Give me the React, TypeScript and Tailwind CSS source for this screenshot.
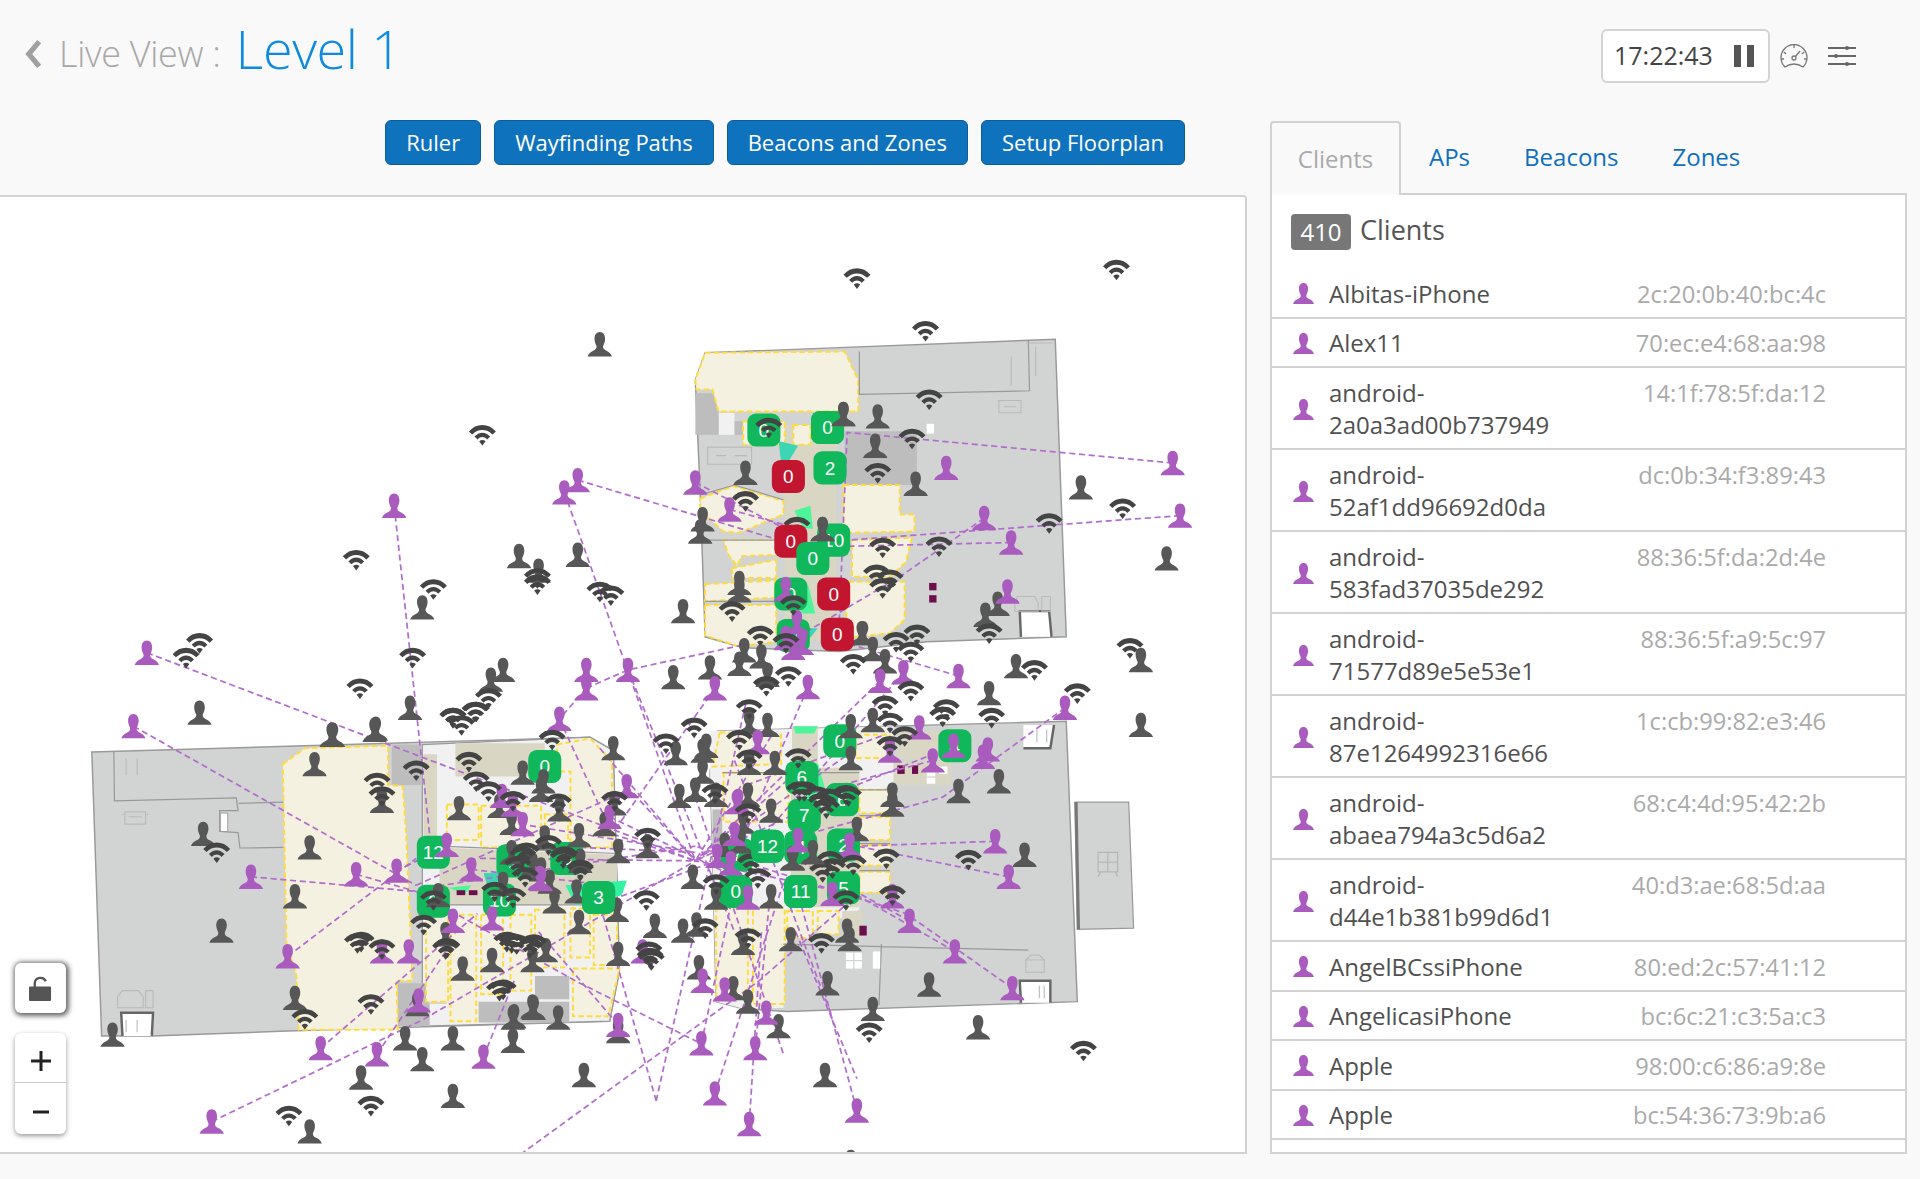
import { Fragment } from "react"

type Pt = [number, number]

const clients = [
  { name: "Albitas-iPhone", mac: "2c:20:0b:40:bc:4c" },
  { name: "Alex11", mac: "70:ec:e4:68:aa:98" },
  { name: "android-2a0a3ad00b737949", mac: "14:1f:78:5f:da:12" },
  { name: "android-52af1dd96692d0da", mac: "dc:0b:34:f3:89:43" },
  { name: "android-583fad37035de292", mac: "88:36:5f:da:2d:4e" },
  { name: "android-71577d89e5e53e1", mac: "88:36:5f:a9:5c:97" },
  { name: "android-87e1264992316e66", mac: "1c:cb:99:82:e3:46" },
  { name: "android-abaea794a3c5d6a2", mac: "68:c4:4d:95:42:2b" },
  { name: "android-d44e1b381b99d6d1", mac: "40:d3:ae:68:5d:aa" },
  { name: "AngelBCssiPhone", mac: "80:ed:2c:57:41:12" },
  { name: "AngelicasiPhone", mac: "bc:6c:21:c3:5a:c3" },
  { name: "Apple", mac: "98:00:c6:86:a9:8e" },
  { name: "Apple", mac: "bc:54:36:73:9b:a6" },
]

// map coordinates are in a 1017 wide space, offset 160 from the top of the page
const darkPeople: Pt[] = [
  [490,280],[689,337],[717,339],[715,363],[609,385],[748,394],[883,397],[953,455],[574,423],[572,433],[604,475],[604,481],[558,498],[815,492],[805,501],
  [424,453],[440,465],[472,452],[345,495],[163,581],[411,546],[401,554],[335,577],[272,599],[307,594],[550,552],[580,544],[604,541],[608,530],[622,535],
  [627,550],[705,516],[713,529],[723,539],[830,543],[932,538],[932,591],[808,565],[713,587],[695,592],[695,618],[612,589],[627,591],[577,608],[552,614],
  [574,629],[568,644],[555,649],[585,648],[612,622],[633,622],[611,648],[630,661],[607,670],[605,686],[592,689],[648,700],[837,697],[700,676],[729,648],
  [729,656],[816,637],[783,645],[566,715],[585,732],[630,731],[646,766],[607,769],[694,766],[692,759],[676,802],[759,803],[713,823],[799,838],[571,789],
  [599,806],[611,817],[636,837],[477,877],[674,877],[558,759],[569,754],[535,755],[505,778],[473,752],[504,742],[453,735],[471,727],[505,694],[473,681],
  [494,672],[502,655],[457,660],[501,610],[271,599],[257,623],[166,680],[253,691],[241,731],[181,759],[241,814],[92,844],[331,847],[370,847],[345,864],
  [295,879],[370,894],[253,923],[312,653],[375,659],[341,819],[427,630],[444,637],[442,644],[408,657],[418,671],[445,683],[418,695],[435,705],[442,709],
  [474,702],[449,719],[358,730],[411,721],[364,762],[378,790],[402,783],[435,783],[446,775],[435,821],[420,829],[456,830],[419,849],[505,841],[436,822],
  [419,830],[306,595],[529,690],[647,700],[672,431],[704,516],[574,612],[695,948],
]

const wifis: Pt[] = [
  [700,226],[912,219],[756,269],[394,354],[759,325],[745,357],[717,385],[609,408],[721,446],[767,445],[857,426],[917,414],[651,429],[716,468],[727,472],
  [721,479],[648,493],[598,498],[628,348],[621,518],[642,524],[749,517],[732,523],[744,531],[808,516],[923,528],[845,546],[880,565],[291,456],[354,480],
  [163,524],[152,536],[337,536],[294,561],[399,569],[389,580],[370,585],[377,591],[439,471],[439,476],[490,482],[499,485],[451,603],[544,606],[567,593],
  [604,603],[644,551],[626,559],[744,563],[723,575],[612,578],[773,578],[770,584],[810,585],[697,541],[727,589],[739,600],[727,608],[652,618],[612,619],
  [653,645],[667,649],[675,659],[693,649],[584,647],[611,663],[724,700],[791,701],[678,702],[680,708],[697,705],[614,704],[672,711],[691,648],[657,645],
  [671,655],[677,651],[529,683],[460,700],[474,709],[427,698],[613,704],[619,716],[585,721],[528,734],[691,734],[729,730],[576,757],[531,781],[530,776],
  [611,765],[671,769],[710,842],[885,857],[418,769],[436,770],[411,807],[177,695],[308,638],[312,649],[340,628],[383,621],[389,637],[399,645],[292,769],
  [312,774],[346,754],[365,773],[303,819],[249,831],[303,902],[236,910],[370,585],[388,580],[419,653],[456,655],[502,653],[448,689],[461,698],[430,695],
  [423,706],[429,715],[474,710],[354,734],[404,727],[419,732],[364,774],[414,768],[422,770],[433,773],[408,808],[295,768],[532,783],
]

const purplePeople: Pt[] = [
  [958,377],[964,420],[826,442],[804,422],[773,381],[568,393],[596,415],[472,391],[461,401],[322,412],[120,532],[109,592],[870,577],[783,551],[738,548],
  [719,555],[660,560],[584,561],[513,546],[479,546],[479,561],[457,586],[751,593],[779,608],[807,611],[803,617],[762,620],[727,612],[619,605],[602,654],
  [600,680],[652,685],[694,689],[586,698],[597,704],[813,686],[824,715],[743,751],[780,776],[827,806],[700,906],[612,917],[584,892],[617,855],[573,851],
  [574,800],[592,807],[626,826],[505,836],[525,776],[512,641],[498,666],[427,672],[441,716],[823,482],[642,480],[651,507],[642,520],[655,524],[648,528],
  [395,862],[308,860],[262,855],[173,915],[235,780],[205,715],[291,713],[324,710],[385,709],[365,689],[370,751],[334,776],[312,776],[342,816],[402,749],
  [410,649],[419,656],[442,717],[611,732],[680,729],[729,731],[603,653],
]

const greenBadges: [number, number, string][] = [
  [624,350,"0"],[676,348,"0"],[678,381,"2"],[681,440,"10"],[646,484,"0"],[648,518,"0"],[686,604,"0"],[780,608,"4"],[445,625,"0"],[655,634,"6"],
  [688,652,"6"],[657,665,"7"],[627,690,"12"],[654,691,"4"],[689,689,"2"],[601,727,"0"],[654,727,"11"],[689,724,"5"],[489,732,"3"],[354,695,"12"],
  [354,735,"0"],[419,702,"1"],[408,734,"10"],[463,700,"5"],[602,697,"7"],
]

const topBadges: [number, number, string, string][] = [
  [644,388,"0","#c2152f"],[646,441,"0","#c2152f"],[664,455,"0","#10b75b"],[681,484,"0","#c2152f"],[684,517,"0","#c2152f"],[676,348,"0","#10b75b"],
  [627,690,"12","#10b75b"],[654,727,"11","#10b75b"],[489,732,"3","#10b75b"],
]

const lines: Pt[][] = [
  [[958,377],[692,352],[685,520]],
  [[964,420],[692,440]],
  [[826,442],[692,445]],
  [[804,422],[735,470],[650,520]],
  [[472,391],[640,441]],
  [[568,393],[640,430]],
  [[596,415],[650,430]],
  [[461,401],[568,702]],
  [[322,412],[352,690]],
  [[120,532],[568,702]],
  [[109,592],[340,722]],
  [[205,715],[340,727]],
  [[291,713],[340,727]],
  [[324,710],[355,695]],
  [[235,780],[340,700]],
  [[262,855],[390,745]],
  [[308,860],[368,770]],
  [[173,915],[345,832],[568,702]],
  [[395,862],[420,800]],
  [[505,836],[440,760]],
  [[479,561],[513,546],[610,525]],
  [[479,561],[457,586]],
  [[513,546],[600,760]],
  [[573,851],[605,700]],
  [[617,855],[630,720]],
  [[584,892],[640,720]],
  [[612,917],[622,760]],
  [[700,906],[655,740]],
  [[536,898],[485,720]],
  [[536,898],[610,570]],
  [[425,942],[620,800],[700,730]],
  [[827,806],[740,745],[568,690]],
  [[780,776],[700,730],[568,702]],
  [[743,751],[640,695]],
  [[824,715],[700,690]],
  [[813,686],[700,690]],
  [[870,577],[770,650],[660,680]],
  [[779,608],[700,640],[568,702]],
  [[762,620],[650,650]],
  [[783,551],[684,522]],
  [[719,555],[568,702]],
  [[738,548],[625,680]],
  [[660,560],[600,700]],
  [[584,561],[500,680]],
  [[457,586],[500,680],[568,702]],
  [[512,641],[568,702]],
  [[342,725],[568,690]],
  [[392,700],[568,702]],
  [[450,690],[568,695]],
  [[425,672],[568,695]],
  [[470,745],[590,700]],
  [[498,666],[590,710]],
  [[340,722],[500,650]],
  [[340,727],[470,800],[572,851]],
  [[385,709],[480,720]],
  [[490,610],[568,702],[650,630]],
  [[630,600],[568,702],[700,610]],
  [[600,620],[680,830]],
  [[568,650],[640,860]],
  [[610,640],[720,600]],
  [[650,760],[700,880]],
]

const rooms: Pt[][] = [
  // top building
  [[576,287],[690,286],[701,309],[701,335],[587,335],[582,317],[569,317],[568,309]],
  [[689,395],[735,395],[735,419],[747,419],[747,433],[696,434],[689,433]],
  [[696,440],[745,438],[740,458],[727,470],[696,470]],
  [[693,474],[739,474],[739,505],[727,516],[690,520]],
  [[572,406],[599,396],[640,408],[640,419],[604,434],[591,433],[572,416]],
  [[591,440],[640,440],[640,452],[606,453],[602,461],[595,452]],
  [[598,463],[634,456],[634,471],[598,471]],
  [[576,476],[633,473],[633,487],[576,490]],
  [[576,493],[634,493],[634,523],[604,527],[576,518]],
  [[607,343],[641,343],[641,362],[607,362]],
  [[648,346],[662,346],[662,362],[648,362]],
  // left building
  [[231,623],[249,610],[317,608],[317,640],[329,641],[332,683],[337,800],[324,800],[325,840],[244,840],[242,795],[234,770]],
  [[365,656],[391,656],[391,685],[365,685]],
  [[393,657],[442,657],[442,691],[393,691]],
  [[445,664],[464,664],[464,689],[445,689]],
  [[455,607],[482,602],[500,621],[500,691],[466,691],[466,629],[455,629]],
  [[348,746],[366,746],[366,817],[348,817]],
  [[368,746],[389,746],[389,833],[368,833]],
  [[393,746],[411,746],[411,811],[393,811]],
  [[417,746],[434,746],[434,808],[417,808]],
  [[437,742],[461,742],[461,789],[437,789]],
  [[466,741],[482,741],[482,781],[466,781]],
  [[485,746],[504,746],[504,787],[485,787]],
  [[468,790],[506,790],[497,829],[468,829]],
  // right building
  [[588,597],[638,599],[638,623],[582,625]],
  [[699,599],[727,599],[727,618],[699,618]],
  [[591,630],[644,630],[644,670],[591,670]],
  [[702,644],[727,644],[727,663],[702,663]],
  [[702,666],[727,666],[727,685],[702,685]],
  [[702,689],[727,689],[727,706],[702,706]],
  [[702,711],[727,711],[727,728],[702,728]],
  [[585,740],[611,740],[611,814],[585,814]],
  [[615,740],[641,740],[641,819],[615,819]],
  [[643,743],[664,743],[664,765],[643,765]],
  [[668,743],[685,743],[685,762],[668,762]],
]

const beige: Pt[][] = [
  [[641,346],[683,346],[683,522],[641,522]],
  [[346,615],[357,615],[357,683],[346,683]],
  [[350,751],[365,751],[365,819],[350,819]],
  [[359,691],[504,697],[504,738],[359,738]],
  [[372,606],[445,606],[445,633],[372,633]],
  [[647,592],[668,592],[668,623],[647,623]],
  [[733,596],[777,596],[777,619],[733,619]],
  [[730,621],[777,621],[777,640],[730,640]],
  [[646,626],[702,626],[702,740],[646,740]],
  [[688,743],[705,743],[705,765],[688,765]],
]

const grayBlocks: Pt[][] = [
  [[690,351],[749,351],[749,395],[690,395]],
  [[568,320],[587,320],[587,354],[568,354]],
  [[600,343],[641,343],[641,354],[600,354]],
  [[320,607],[344,607],[344,640],[320,640]],
  [[325,802],[351,802],[351,837],[325,837]],
  [[437,796],[465,796],[465,815],[437,815]],
  [[391,817],[465,817],[465,834],[391,834]],
  [[582,660],[590,660],[590,690],[582,690]],
]

function pts(list: Pt[]) {
  return list.map(p => p.join(",")).join(" ")
}

const personPath = "M12 0C8.500 0 6.800 3 6.800 6.800c0 3 1.200 5.400 2 7 .2 2.400-.8 3.600-3.200 4.600C3 19.600 1 21 0 24h24c-1-3-3-4.400-5.600-5.600-2.400-1-3.400-2.200-3.200-4.600.8-1.600 2-4 2-7C17.200 3 15.500 0 12 0z"

function Person({ x, y, color }: { x: number; y: number; color: string }) {
  return <path d={personPath} fill={color} transform={`translate(${x - 10} ${y - 10}) scale(0.83)`} />
}

function Wifi({ x, y }: { x: number; y: number }) {
  return (
    <g transform={`translate(${x - 11} ${y - 8}) scale(1.05)`} fill="#444">
      <path d="M0 5C5.600-1.700 15.400-1.700 21 5l-2.600 2.400C13.800 2.800 7.200 2.800 2.600 7.400z" />
      <path d="M4.400 9C8 5 13 5 16.600 9l-2.400 2.200C11.800 8.800 9.200 8.800 6.800 11.200z" />
      <path d="M8 12.600c1.600-1.400 3.400-1.400 5 0L10.500 16z" />
    </g>
  )
}

function Badge({ x, y, label, color }: { x: number; y: number; label: string; color: string }) {
  return (
    <g>
      <rect x={x - 13.5} y={y - 13.5} width={27} height={27} rx={7} fill={color} />
      <text x={x} y={y + 5.5} textAnchor="middle" fontSize={15.5} fill="#fff" fontFamily="'Liberation Sans', sans-serif">
        {label}
      </text>
    </g>
  )
}

function FloorPlan() {
  return (
    <g>
      {/* building shells */}
      <polygon points={pts([[576,287],[862,276],[871,519],[757,523],[686,531],[607,528],[576,519],[572,403],[568,309]])} fill="#d2d4d3" stroke="#999" strokeWidth={1.2} />
      <polygon points={pts([[587,336],[600,336],[600,354],[587,354]])} fill="#f1f1f1" />
      <polygon points={pts([[75,613],[249,608],[482,601],[501,612],[506,792],[498,833],[367,837],[235,841],[124,845],[83,845]])} fill="#d2d4d3" stroke="#999" strokeWidth={1.2} />
      <polygon points={pts([[345,607],[482,601],[501,612],[506,792],[498,833],[345,837]])} fill="#f1f1f1" stroke="#999" strokeWidth={1} />
      <polygon points={pts([[586,596],[835,589],[871,588],[880,817],[643,825],[608,823],[585,817],[582,691],[580,629]])} fill="#d2d4d3" stroke="#999" strokeWidth={1.2} />
      <polygon points={pts([[580,596],[730,592],[730,640],[702,650],[702,742],[640,770],[640,822],[608,823],[585,817],[582,691],[580,629]])} fill="#f1f1f1" />
      <polygon points={pts([[878,654],[922,654],[926,757],[880,758]])} fill="#d2d4d3" stroke="#999" />
      <path d="M879 654l2 104" stroke="#777" strokeWidth={2.5} fill="none" />
      <path d="M897 695h16v16h-16zM897 703h16M905 695v16M899 711l-2 4M911 711l2 4" stroke="#b5b5b5" fill="none" />
      {grayBlocks.map((b, i) => <polygon key={i} points={pts(b)} fill="#bdbdbd" />)}
      {beige.map((b, i) => <polygon key={i} points={pts(b)} fill="#d9d6c3" />)}
      {rooms.map((r, i) => (
        <polygon key={i} points={pts(r)} fill="#f5f1e0" stroke="#ffdc3e" strokeWidth={1.6} strokeDasharray="4.5 2.5" />
      ))}
      {/* walls */}
      <path d="M702 286v35l139-3 -1-41M93 613l.5 40 99.500-2.500 1.500 10.500h-15v17l15 1 1.500 12.500 35.500-.5M195 655l36.500-1M590 630h112M702 644h30M702 665h25M702 688h25M702 710h25M720 770l-2 50M640 770l80 2 120 3M572 403l28-8 40 12M572 440h68M576 490h58M360 690l144 6M360 738h144" stroke="#999" strokeWidth={1} fill="none" />
      <polygon points={pts([[180,663],[186,663],[186,678],[180,678]])} fill="#fff" stroke="#888" strokeWidth={.6} />
      {/* lifts */}
      <polygon points={pts([[99,826],[125,826],[124,845],[101,845]])} fill="#fff" />
      <path d="M100 845l-1-19h26l-1 19" stroke="#666" strokeWidth={2} fill="none" />
      <polygon points={pts([[833,498],[857,498],[860,519],[834,519]])} fill="#fff" />
      <path d="M834 519l-1-21h24l2 21" stroke="#666" strokeWidth={2} fill="none" />
      <polygon points={pts([[836,591],[861,591],[858,610],[836,610]])} fill="#fff" />
      <path d="M836 610h22l3-19" stroke="#666" strokeWidth={2} fill="none" />
      <polygon points={pts([[833,800],[858,800],[858,818],[834,818]])} fill="#fff" />
      <path d="M834 818l-1-18h25v18" stroke="#666" strokeWidth={2} fill="none" />
      {/* car bays and arrows */}
      <g stroke="#b9b9b9" strokeWidth={.9} fill="none">
        <path d="M102 662h17v10h-17zM105 666h11M101 664h-1M120 664h1" />
        <path d="M96 822v-9l4-5h13l4 5v9zM119 808h6v14h-6z" />
        <path d="M816 326h18v10h-18zM820 331h10" />
        <path d="M829 491l2-5h14l3 5v7h-19zM851 486h7v12h-7z" />
        <path d="M847 595v10M855 595v10M103 618v14M112 618v14M103 832v10M112 832v10M849 804v10M853 804v10M838 279h22M826 290v24M846 282v24" />
        <path d="M838 783h15v10h-15zM842 779h7l4 4h-15z" />
        <path d="M578 364h36v14h-36zM585 371h8M600 371h10" />
      </g>
      {/* teal zones and small rooms */}
      <polygon points={pts([[636,359],[652,363],[644,376],[638,376]])} fill="#3dd6b5" />
      <polygon points={pts([[649,416],[662,412],[664,431],[656,430]])} fill="#4df59a" />
      <polygon points={pts([[660,476],[666,500],[654,500]])} fill="#4df59a" />
      <polygon points={pts([[640,512],[668,512],[660,522],[642,522]])} fill="#3dd6b5" />
      <polygon points={pts([[654,630],[668,622],[676,650],[658,652]])} fill="#4df59a" />
      <polygon points={pts([[648,592],[668,592],[665,598],[650,598]])} fill="#4df59a" />
      <polygon points={pts([[462,722],[512,718],[508,730],[470,738]])} fill="#33f2a2" />
      <polygon points={pts([[395,712],[412,712],[408,722],[398,722]])} fill="#3dd6b5" />
      <polygon points={pts([[366,724],[385,722],[380,729]])} fill="#4df59a" />
      <g fill="#6b0f4d">
        <rect x={759} y={475} width={6} height={6} />
        <rect x={759} y={485} width={6} height={6} />
        <rect x={733} y={624} width={6} height={7} />
        <rect x={745} y={624} width={5} height={7} />
        <rect x={702} y={755} width={6} height={8} />
        <rect x={373} y={726} width={7} height={4} />
        <rect x={383} y={726} width={7} height={4} />
      </g>
      <g fill="#fff">
        <rect x={691} y={777} width={6} height={6} />
        <rect x={698} y={777} width={6} height={6} />
        <rect x={691} y={784} width={6} height={6} />
        <rect x={698} y={784} width={6} height={6} />
        <rect x={713} y={776} width={6} height={14} />
        <rect x={757} y={627} width={7} height={6} />
        <rect x={757} y={634} width={7} height={5} />
        <rect x={767} y={625} width={7} height={6} />
        <rect x={757} y={345} width={6} height={8} />
      </g>
    </g>
  )
}

function LiveMap() {
  return (
    <svg viewBox="0 160 1017 782" className="block h-[958px] w-[1245px]">
      <FloorPlan />
      {lines.map((l, i) => (
        <polyline key={i} points={pts(l)} fill="none" stroke="#b26ccc" strokeWidth={1.4} strokeDasharray="5 3" />
      ))}
      {greenBadges.map((b, i) => <Badge key={i} x={b[0]} y={b[1]} label={b[2]} color="#10b75b" />)}
      {darkPeople.map((p, i) => <Person key={i} x={p[0]} y={p[1]} color="#575757" />)}
      {purplePeople.map((p, i) => <Person key={i} x={p[0]} y={p[1]} color="#a95cbe" />)}
      {wifis.map((p, i) => <Wifi key={i} x={p[0]} y={p[1]} />)}
      {topBadges.map((b, i) => <Badge key={i} x={b[0]} y={b[1]} label={b[2]} color={b[3]} />)}
      <Person x={689} y={337} color="#575757" />
      <Person x={672} y={431} color="#575757" />
      <Person x={664} y={695} color="#575757" />
    </svg>
  )
}

function MapControls() {
  return (
    <div className="absolute left-[15px] top-[766px] flex w-[51px] flex-col">
      <button className="flex h-[50px] items-center justify-center rounded-md bg-white shadow-[1px_1px_5px_2px_rgba(0,0,0,0.6)]">
        <svg viewBox="0 0 24 28" className="h-[27px] w-[23px]">
          <path d="M6 13V8.500a6 6 0 0 1 11.500-2" fill="none" stroke="#555" strokeWidth={2.4} />
          <rect x={0} y={12} width={23} height={15} rx={1} fill="#555" />
        </svg>
      </button>
      <div className="mt-[20px] flex flex-col rounded-md bg-white shadow-[0_2px_5px_rgba(0,0,0,0.4)]">
        <button className="flex h-[50px] items-center justify-center border-b border-[#ccc] pt-[6px]">
          <svg viewBox="0 0 20 20" className="h-[20px] w-[20px]">
            <path d="M10 0v20M0 10h20" stroke="#222" strokeWidth={3} />
          </svg>
        </button>
        <button className="flex h-[51px] items-center justify-center pt-[6px]">
          <svg viewBox="0 0 16 4" className="h-[4px] w-[16px]">
            <path d="M0 2h16" stroke="#222" strokeWidth={3} />
          </svg>
        </button>
      </div>
    </div>
  )
}

function Header() {
  return (
    <div className="flex h-[120px] items-start pl-[24px] pt-[17px]">
      <svg viewBox="0 0 20 30" className="mr-[16px] mt-[22px] h-[30px] w-[19px] shrink-0">
        <path d="M16 2L5 15l11 13" fill="none" stroke="#a0a0a0" strokeWidth={5.5} />
      </svg>
      <span className="mt-[13px] text-[36px] font-light leading-[48px] tracking-[-0.3px] text-[#a8a8a8]">Live View :</span>
      <span className="ml-[15px] text-[54px] font-light leading-[62px] tracking-[-0.4px] text-[#0e8ae0]">Level 1</span>
    </div>
  )
}

function Toolbar() {
  const buttons = ["Ruler", "Wayfinding Paths", "Beacons and Zones", "Setup Floorplan"]
  return (
    <div className="flex h-[45px] justify-end gap-[13px] pr-[62px]">
      {buttons.map(b => (
        <button key={b} className="rounded-md border border-[#0b5c9c] bg-[#0f72bd] px-[20px] text-[22px] text-white">
          {b}
        </button>
      ))}
    </div>
  )
}

function Clock() {
  return (
    <div className="flex h-[121px] items-start justify-end pr-[51px] pt-[29px]">
      <div className="flex h-[54px] w-[169px] items-center rounded-md border-2 border-[#d4d4d4] bg-white pl-[11px]">
        <span className="w-[120px] text-[25px] text-[#444]">17:22:43</span>
        <div className="flex gap-[6px]">
          <div className="h-[22px] w-[7px] bg-[#555]" />
          <div className="h-[22px] w-[7px] bg-[#555]" />
        </div>
      </div>
      <svg viewBox="0 0 28 24" className="ml-[10px] mt-[15px] h-[24px] w-[28px]" fill="none" stroke="#777" strokeWidth={1.3}>
        <path d="M5 23A13 13 0 1 1 23 23Q14 17 5 23z" />
        <path d="M14 1v3M4 8l2 2M24 8l-2 2M1 15h3M27 15h-3M15 13l5-6" />
        <circle cx={14} cy={14} r={2} />
      </svg>
      <svg viewBox="0 0 28 20" className="ml-[20px] mt-[17px] h-[20px] w-[28px]" stroke="#666" strokeWidth={1.8}>
        <path d="M0 2h28M0 10h28M0 18h28" />
        <circle cx={19} cy={2} r={2} fill="#666" stroke="none" />
        <circle cx={8} cy={10} r={2} fill="#666" stroke="none" />
        <circle cx={19} cy={18} r={2} fill="#666" stroke="none" />
      </svg>
    </div>
  )
}

function ClientRow({ name, mac }: { name: string; mac: string }) {
  return (
    <div className="flex items-center border-b-2 border-[#d2d2d2] pb-[6.5px] pl-[21px] pr-[79px] pt-[8.5px]">
      <svg viewBox="0 0 24 24" className="h-[21px] w-[21px] shrink-0">
        <path d={personPath} fill="#a95cbe" />
      </svg>
      <div className="ml-[15px] w-[240px] text-[24px] font-medium leading-[32.5px] text-[#505050]">{name}</div>
      <div className="ml-auto self-start text-[23.7px] leading-[32.5px] text-[#aaa]">{mac}</div>
    </div>
  )
}

function ClientsPanel() {
  return (
    <div>
      <div className="relative z-10 flex h-[74px] items-start">
        <div className="h-[74px] w-[131px] rounded-t-sm border-2 border-b-0 border-[#d2d2d2] bg-[#f9f9f9] pt-[20px] text-center text-[24px] leading-[32px] text-[#aaa]">
          Clients
        </div>
        {[["APs", "ml-[28px]"], ["Beacons", "ml-[54px]"], ["Zones", "ml-[54px]"]].map(([t, m]) => (
          <span key={t} className={`${m} pt-[20px] text-[24px] leading-[32px] text-[#0f6fbe]`}>{t}</span>
        ))}
      </div>
      <div className="-mt-[2px] h-[961px] overflow-hidden border-2 border-[#d2d2d2] bg-white">
        <div className="flex h-[74px] items-start pl-[19px] pt-[19px]">
          <span className="flex h-[36px] w-[60px] items-center justify-center rounded-sm bg-[#777] text-[24px] text-white">410</span>
          <span className="ml-[9px] text-[27px] leading-[32px] text-[#555]">Clients</span>
        </div>
        {clients.map((c, i) => (
          <Fragment key={i}>
            <ClientRow name={c.name} mac={c.mac} />
          </Fragment>
        ))}
      </div>
    </div>
  )
}

export default function App() {
  return (
    <div className="flex h-[1179px] overflow-hidden bg-[#f9f9f9] font-['Open_Sans',sans-serif]">
      <div className="w-[1247px] shrink-0">
        <Header />
        <Toolbar />
        <div className="relative mt-[30px] h-[959px] overflow-hidden rounded-tr-sm border-y-2 border-r-2 border-[#d2d2d2] bg-white">
          <LiveMap />
          <MapControls />
        </div>
      </div>
      <div className="ml-[23px] w-[637px] shrink-0">
        <Clock />
        <ClientsPanel />
      </div>
    </div>
  )
}
